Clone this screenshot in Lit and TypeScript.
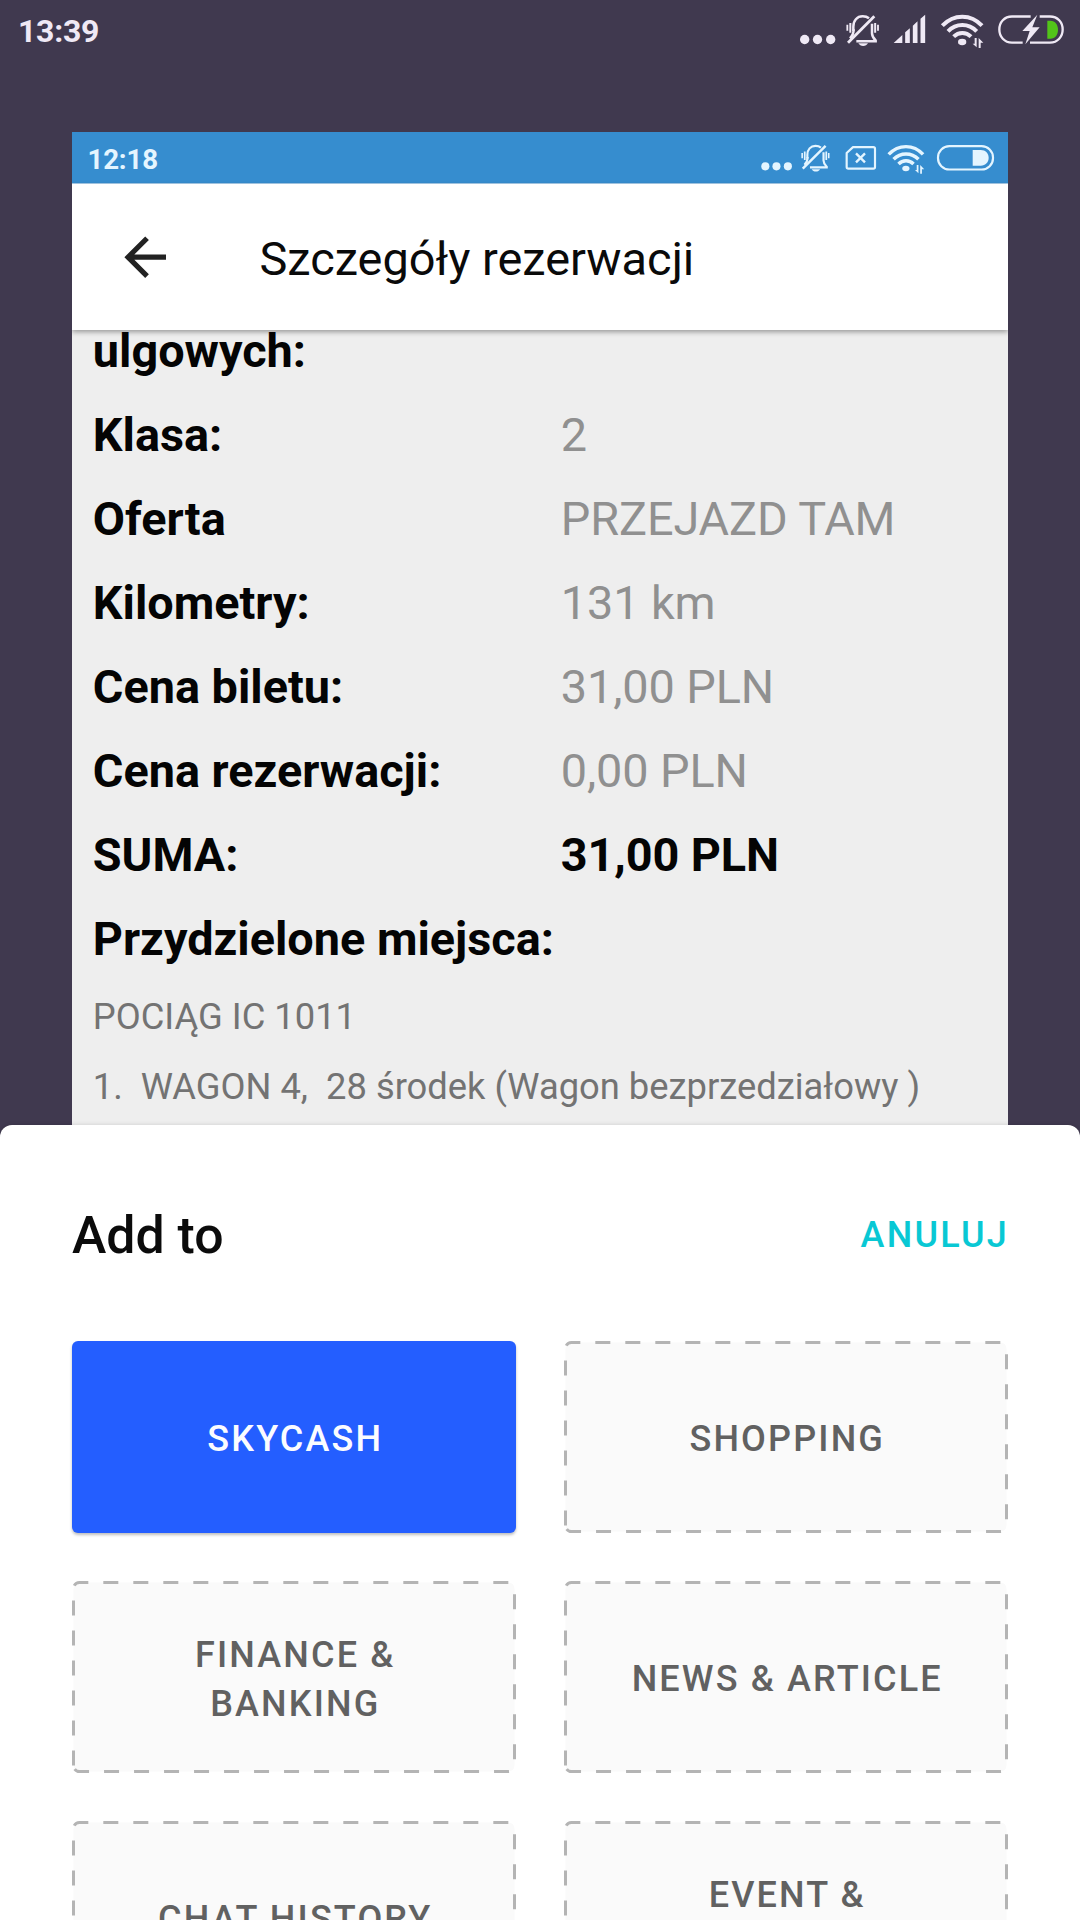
import { LitElement, html, css, svg, nothing } from 'lit';
import { customElement, property } from 'lit/decorators.js';
import { classMap } from 'lit/directives/class-map.js';

/* Glyphs shared by both status bars, drawn on a 3x grid. */
const dots = svg`
  <g fill="currentColor">
    <circle cx="74" cy="118.500" r="14"/>
    <circle cx="112.500" cy="118.500" r="14"/>
    <circle cx="152" cy="118.500" r="14"/>
  </g>`;

const mutedBell = svg`
  <g fill="none" stroke="currentColor" stroke-width="7.500">
    <path d="M220 93V80C220 62 231 49 248 49C255 49 262 51 267 55"/>
    <path d="M276 71V100C276 109 279 114 287 121.500V123.500H229"/>
    <path d="M221 88C221 101 218 107 210 115"/>
    <path d="M204 128L283 49" stroke-width="8.500"/>
    <path d="M202 74V92M294 74V92" stroke-width="5.500"/>
    <path d="M211 69V98M285.500 69V98" stroke-width="6"/>
  </g>
  <path d="M235 130H264C261 135 256 138 249.500 138C243 138 238 135 235 130Z" fill="currentColor"/>`;

const wifi = svg`
  <g fill="none" stroke="currentColor" stroke-width="12">
    <path d="M487 77C521 41 573 41 606 77"/>
    <path d="M504 94C528 69 566 69 590 94"/>
    <path d="M521 110C536 95 558 95 573 110"/>
  </g>
  <ellipse cx="546.500" cy="126" rx="12.500" ry="9.500" fill="currentColor"/>
  <path d="M590 114V142L578 131H584V114ZM596 144V114L610 128H602V144Z" fill="currentColor"/>`;

const deviceIcons = html`
  <svg class="device-icons" viewBox="0 0 900 180">
    ${dots}${mutedBell}
    <path d="M341 129L367 105V129ZM375.500 129V97L389.500 85V129ZM398.500 129V77L412.500 64V129ZM421.500 129V56L435.500 44V129Z" fill="currentColor"/>
    ${wifi}
    <g fill="none" stroke="currentColor" stroke-width="7">
      <path d="M752 49.500H696C673 49.500 658 67 658 88.500C658 110 673 128 696 128H728"/>
      <path d="M779 49.500H810C833 49.500 848 67 848 88.500C848 110 833 128 810 128H750"/>
    </g>
    <path d="M772 44L727 93H749L736 133L779 82H757Z" fill="currentColor"/>
    <path class="charge" d="M802 62H811C826 62 834 75 834 89C834 103 826 116 811 116H802Z"/>
  </svg>`;

const ticketIcons = html`
  <svg class="ticket-icons" viewBox="0 21 804 156">
    <g transform="translate(11.900 21.300) scale(.8667)">${dots}</g>
    <g transform="translate(11.400 20) scale(.8667)">${mutedBell}</g>
    <g fill="none" stroke="currentColor" stroke-width="6.500">
      <path d="M339 66.500H400Q405 66.500 405 71.500V126Q405 131 400 131H325Q320 131 320 126V84Z" stroke-linejoin="round"/>
      <path d="M348 85L375 112M375 85L348 112" stroke-width="7"/>
    </g>
    <g transform="translate(24 21.500) scale(.8667)">${wifi}</g>
    <rect x="594" y="63.500" width="165" height="70" rx="34" fill="none" stroke="currentColor" stroke-width="6.500"/>
    <path d="M698 75H722C737 75 746 85 746 98.500C746 112 737 122 722 122H698Z" fill="currentColor"/>
  </svg>`;

@customElement('category-tile')
class CategoryTile extends LitElement {
  @property({ attribute: false }) lines: string[] = [];
  @property({ type: Boolean }) selected = false;

  static styles = css`
    :host { display: grid; height: 192px; }
    .tile, .outline { grid-area: 1 / 1; width: 444px; height: 192px; box-sizing: border-box; }
    .tile {
      display: flex; flex-direction: column; align-items: center; justify-content: center;
      padding: 5px 0 0 2.500px; z-index: 1;
      font: 500 36px/49px Roboto, "Liberation Sans", sans-serif;
      letter-spacing: 2.150px; color: #616161;
    }
    .line { height: 49px; white-space: pre; }
    .selected {
      color: #fbfcff; background: #245eff; border-radius: 6px;
      box-shadow: 0 2px 3px rgba(0, 0, 0, .26);
    }
    .outline { display: block; }
    .outline path { fill: #fafafa; stroke: #b4b4b4; stroke-width: 3; stroke-dasharray: 15; }
  `;

  render() {
    return html`
      ${this.selected ? nothing : html`
        <svg class="outline" viewBox="0 0 444 192">
          <path d="M1.500 184.500V7.500A6 6 0 0 1 7.500 1.500H436.500A6 6 0 0 1 442.500 7.500V184.500A6 6 0 0 1 436.500 190.500H7.500A6 6 0 0 1 1.500 184.500"/>
        </svg>`}
      <div class=${classMap({ tile: true, selected: this.selected })}>
        ${this.lines.map((line) => html`<span class="line">${line}</span>`)}
      </div>`;
  }
}

const details: { label: string; value?: string; total?: boolean }[] = [
  { label: 'ulgowych:' },
  { label: 'Klasa:', value: '2' },
  { label: 'Oferta', value: 'PRZEJAZD TAM' },
  { label: 'Kilometry:', value: '131 km' },
  { label: 'Cena biletu:', value: '31,00 PLN' },
  { label: 'Cena rezerwacji:', value: '0,00 PLN' },
  { label: 'SUMA:', value: '31,00 PLN', total: true },
  { label: 'Przydzielone miejsca:' },
];

const categories: { lines: string[]; selected?: boolean }[] = [
  { lines: ['SKYCASH'], selected: true },
  { lines: ['SHOPPING'] },
  { lines: ['FINANCE &', 'BANKING'] },
  { lines: ['NEWS & ARTICLE'] },
  { lines: ['CHAT HISTORY'] },
  { lines: ['EVENT &', ''] },
];

@customElement('app-root')
class AppRoot extends LitElement {
  static styles = css`
    :host {
      display: flex; flex-direction: column; width: 1080px; height: 1920px; overflow: hidden;
      background: #40394f; font-family: Roboto, "Liberation Sans", sans-serif;
    }
    svg { display: block; flex: none; }
    .device-bar {
      display: flex; justify-content: space-between; align-items: flex-start;
      height: 132px; flex: none; padding-left: 18px; color: #efe9f5;
    }
    .device-time { font-size: 32px; font-weight: 700; line-height: 63px; letter-spacing: -.250px; }
    .device-icons { width: 300px; height: 60px; }
    .charge { fill: #52c41a; }

    .ticket {
      display: flex; flex-direction: column; flex: none; height: 993px; margin: 0 72px;
      overflow: hidden; background: #eee;
    }
    .ticket-bar {
      display: flex; justify-content: space-between; flex: none; height: 51px;
      padding-left: 15.500px; background: #368dcf; border-bottom: 1px solid #a9cfec; color: #e4f5ff;
    }
    .ticket-time { font-size: 27.700px; font-weight: 700; line-height: 55px; letter-spacing: -.200px; }
    .ticket-icons { width: 268px; height: 52px; }
    .ticket-header {
      display: flex; align-items: center; flex: none; height: 145.500px; gap: 83px;
      padding-left: 42px; background: #fff; z-index: 1;
      box-shadow: 0 2px 5px rgba(0, 0, 0, .36);
    }
    .back { width: 62.400px; height: 62.400px; fill: #222; }
    .ticket-title { font-size: 46.900px; line-height: 56px; padding-top: 5px; color: #0a0a0a; white-space: nowrap; }
    .details { margin-top: -20.500px; }
    .row { display: grid; grid-template-columns: 468px 468px; height: 84px; line-height: 84px; font-size: 46.800px; }
    .label, .value { padding-left: 20.800px; white-space: nowrap; }
    .label { font-weight: 700; color: #040404; }
    .value { color: #909090; letter-spacing: -.100px; }
    .total { font-weight: 700; color: #040404; }
    .seat { padding-left: 20.800px; height: 70px; line-height: 71px; font-size: 36.350px; color: #737373; white-space: pre; }

    .sheet {
      flex: none; height: 795px; padding: 0 72px; overflow: hidden; box-sizing: border-box;
      background: #fff; border-radius: 12px 12px 0 0; box-shadow: 0 0 4px rgba(0, 0, 0, .15);
    }
    .sheet-header { display: flex; align-items: center; justify-content: space-between; height: 216px; }
    .sheet-title { font-size: 51.800px; font-weight: 500; line-height: 60px; padding-top: 5px; color: #0b0b0b; }
    .cancel {
      font-size: 36px; font-weight: 500; line-height: 48px; letter-spacing: 2.200px;
      padding-top: 3px; margin-right: -1px; color: #09c8d4;
    }
    .categories { display: grid; grid-template-columns: 444px 444px; gap: 48px; }
  `;

  render() {
    return html`
      <header class="device-bar">
        <span class="device-time">13:39</span>
        ${deviceIcons}
      </header>
      <section class="ticket">
        <div class="ticket-bar">
          <span class="ticket-time">12:18</span>
          ${ticketIcons}
        </div>
        <div class="ticket-header">
          <svg class="back" viewBox="0 0 24 24">
            <path d="M20 11H7.830l5.590-5.590L12 4l-8 8 8 8 1.410-1.410L7.830 13H20v-2z"/>
          </svg>
          <span class="ticket-title">Szczegóły rezerwacji</span>
        </div>
        <div class="details">
          ${details.map((d) => html`
            <div class="row">
              <span class="label">${d.label}</span>
              ${d.value ? html`<span class=${classMap({ value: true, total: !!d.total })}>${d.value}</span>` : nothing}
            </div>`)}
          <div class="seat">POCIĄG IC 1011</div>
          <div class="seat">1.  WAGON 4,  28 środek (Wagon bezprzedziałowy )</div>
        </div>
      </section>
      <section class="sheet">
        <div class="sheet-header">
          <span class="sheet-title">Add to</span>
          <span class="cancel">ANULUJ</span>
        </div>
        <div class="categories">
          ${categories.map((c) => html`
            <category-tile .lines=${c.lines} ?selected=${c.selected}></category-tile>`)}
        </div>
      </section>`;
  }
}
